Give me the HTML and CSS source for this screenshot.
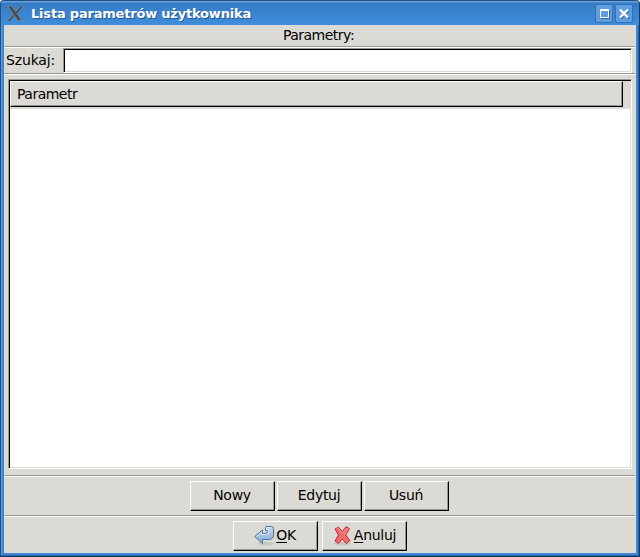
FILE: index.html
```html
<!DOCTYPE html>
<html lang="pl">
<head>
<meta charset="utf-8">
<title>Lista parametrów użytkownika</title>
<link rel="stylesheet" href="styles.css">
</head>
<body>
<div class="window">
  <header class="titlebar">
    <svg class="logo" width="18" height="18" viewBox="0 0 18 18">
      <path d="M16.500 2 10 9M8 10 2 17" stroke="#7d868e" stroke-width="2.600" fill="none"/>
      <path d="M1.500 2h4L16 16.500h-4z" fill="#414a52" stroke="#80858a" stroke-width=".9"/>
      <path d="M16 2.500 10 9M8 11 2.500 17" stroke="#3b444c" stroke-width="1.200" fill="none"/>
    </svg>
    <h1 class="title">Lista parametrów użytkownika</h1>
    <button class="control" aria-label="Maksymalizuj">
      <svg width="18" height="19" viewBox="0 0 18 19" shape-rendering="crispEdges"><path d="M6 14.500h8.500V6" fill="none" stroke="#2a66a5"/><path d="M5.500 5.500h8v8h-8z" fill="none" stroke="#fff"/><path d="M5 5h9v2H5z" fill="#fff"/></svg>
    </button>
    <button class="control" aria-label="Zamknij">
      <svg width="18" height="19" viewBox="0 0 18 19"><path d="m6 6.500 8 8m0-8-8 8" stroke="#2a66a5" stroke-width="2"/><path d="m5 5.500 8 8m0-8-8 8" stroke="#fff" stroke-width="2.400"/></svg>
    </button>
  </header>
  <main class="content">
    <div class="caption ruled"><span class="text tight">Parametry:</span></div>
    <div class="search ruled">
      <label class="text" for="query">Szukaj:</label>
      <input class="field" id="query" type="text">
    </div>
    <section class="list-pane ruled">
      <div class="list">
        <div class="list-head"><div class="column"><span class="text tight">Parametr</span></div></div>
      </div>
    </section>
    <div class="actions ruled">
      <button class="button"><span class="text">Nowy</span></button>
      <button class="button"><span class="text">Edytuj</span></button>
      <button class="button"><span class="text">Usuń</span></button>
    </div>
    <div class="actions confirm">
      <button class="button">
        <svg width="22" height="22" viewBox="0 0 22 22">
          <defs><linearGradient id="blue" x2="0" y2="1"><stop stop-color="#c6daee"/><stop offset="1" stop-color="#82aad4"/></linearGradient></defs>
          <ellipse cx="12" cy="18.500" rx="8" ry="1.700" fill="#c5c5c1"/>
          <path d="M.7 11.500 8.500 5v3.500h3q2 0 2-2V5.500h-2V2.500q0-1 1-1H17q2.500 0 2.500 2V10q0 4.500-5 4.500h-6v4z" fill="url(#blue)" stroke="#4a73a3" stroke-linejoin="round"/>
          <path d="M2.500 11.500 7.500 7.400v2.100h4.500q2.500 0 2.500-3V4.500h-2v-2h5" fill="none" stroke="#e1edf8"/>
        </svg>
        <span class="text"><u>O</u>K</span>
      </button>
      <button class="button">
        <svg width="22" height="22" viewBox="0 0 22 22">
          <ellipse cx="10" cy="18.500" rx="8.500" ry="1.700" fill="#c5c5c1"/>
          <path d="M3 4 6.500 2.200 10.500 6.500 14 1.700l3.500 2-3.800 6.300 4.300 5.500-3.500 3-4.500-4.500-3.500 4.500-3.500-2.500L6.500 10z" fill="#ee6a6d" stroke="#c4282c" stroke-linejoin="round"/>
          <path d="M4.500 4.300 6.300 3.500l4.200 4.800 3.800-5.100 1.600.9-3.600 5.900" fill="none" stroke="#f99a9b" stroke-width=".9"/>
        </svg>
        <span class="text"><u>A</u>nuluj</span>
      </button>
    </div>
  </main>
</div>
</body>
</html>
```

FILE: styles.css
```css
* { box-sizing: border-box; }
body { margin: 0; background: #fff; font: 14px/18px "DejaVu Sans", sans-serif; color: #000; }
button { font: inherit; color: inherit; margin: 0; border-radius: 0; }
svg { display: block; flex: none; }
.window {
  width: 640px; height: 557px; padding: 0 3px 3px;
  display: flex; flex-direction: column;
  background: #3d87d5; border: 1px solid #204f80;
  border-right-color: #153a62; border-bottom-color: #153a62;
  border-radius: 4px 4px 0 0;
  box-shadow: inset -1px -1px #2663a3, inset 1px 1px #5d9cdd;
}
.titlebar {
  flex: none; height: 24px; margin: 0 -3px; padding: 3px 6px 0 5px;
  display: flex; align-items: flex-start;
  background: linear-gradient(#659fdb 0 1px, #357bc4 2px, #408ddb);
  border-radius: 3px 3px 0 0;
}
.title {
  flex: 1; margin: 0 0 0 7px; padding-top: 1px; font-size: 13px; line-height: 18px; font-weight: bold;
  letter-spacing: -.2px; color: #fff; text-shadow: 1px 1px #235a94; white-space: nowrap;
}
.control {
  width: 18px; height: 19px; margin-left: 2px; padding: 0;
  background: #609de0; border: 1px solid #3471b4; border-radius: 2px;
}
.control svg { margin: -1px; }
.content { flex: 1; display: flex; flex-direction: column; background: #dcdad5; }
.text { letter-spacing: -.28px; }
.tight { letter-spacing: -.5px; }
.ruled { margin-right: 1px; border-bottom: 1px solid #fff; box-shadow: inset 0 -1px #999791; }
.caption { height: 23px; text-align: center; padding: 1px 2px 0 0; }
.search { height: 27px; display: flex; padding: 0 3px 0 2px; }
.search label { width: 57px; padding-top: 3px; letter-spacing: -.15px; }
.field {
  flex: 1; height: 25px; margin: 0; border: 1px solid #999791;
  border-right-color: #fff; border-bottom-color: #fff; outline: 0;
  box-shadow: inset 1px 1px #000, inset -1px -1px #dcdad5;
}
.list-pane { height: 402px; padding: 4px 3px 6px 4px; }
.list {
  height: 390px; background: #fff; padding: 1px;
  border: 1px solid #999791; border-right-color: #fff; border-bottom-color: #fff;
  box-shadow: inset 1px 1px #000, inset -1px -1px #dcdad5;
}
.list-head { height: 28px; background: #dcdad5; padding-right: 7px; }
.column { height: 26px; padding: 3px 6px; }
.column, .button {
  background: #dcdad5; border: 1px solid #fff;
  border-right-color: #000; border-bottom-color: #000;
  box-shadow: inset -1px -1px #999791;
}
.actions { height: 40px; display: flex; justify-content: center; gap: 2px; padding-top: 4px; }
.button { width: 85px; height: 30px; padding: 0 1px 1px 0; display: flex; align-items: center; justify-content: center; }
.button .text { margin-bottom: 2px; }
.confirm { height: 36px; gap: 4px; }
u { text-underline-offset: 2px; text-decoration-thickness: 1px; }
```
